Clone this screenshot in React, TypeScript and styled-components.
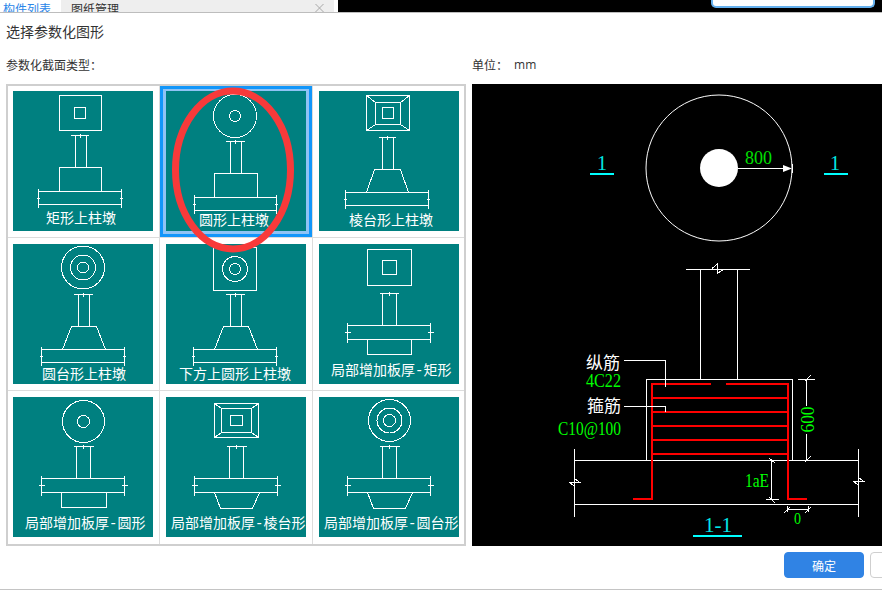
import React from 'react';
import styled, { createGlobalStyle } from 'styled-components';

type Tile = {
  label: string;
  labelX: number;
  labelY: number;
  rects?: number[][];
  circles?: number[][];
  miter?: boolean;
  col: number[];
  cap: number[];
  colEnd: number;
  slab: number[];
  pier: number[][];
  tick: number;
};

const tiles: Tile[] = [
  {
    label: '矩形上柱墩',
    labelX: 33,
    labelY: 120,
    rects: [[46.5, 4.5, 42, 35], [61.5, 16.5, 11, 11]],
    col: [62.5, 73.5],
    cap: [58, 76, 44.5],
    colEnd: 76.5,
    slab: [25.5, 108.5, 100.5, 113.5],
    pier: [[46.5, 100.5], [46.5, 76.5], [88.5, 76.5], [88.5, 100.5]],
    tick: 1.5,
  },
  {
    label: '圆形上柱墩',
    labelX: 33,
    labelY: 122,
    circles: [[69, 25, 21.5], [69, 25, 5.5]],
    col: [64.5, 75.5],
    cap: [60, 79, 50.5],
    colEnd: 82.5,
    slab: [28.5, 110.5, 106.5, 119.5],
    pier: [[48.5, 106.5], [48.5, 82.5], [91.5, 82.5], [91.5, 106.5]],
    tick: 1.5,
  },
  {
    label: '棱台形上柱墩',
    labelX: 30,
    labelY: 122,
    rects: [[47.5, 4.5, 43, 35], [56.5, 11.5, 25, 22], [63.5, 16.5, 11, 11]],
    miter: true,
    col: [63.5, 74.5],
    cap: [59.5, 76.5, 46.5],
    colEnd: 78.5,
    slab: [26.5, 109.5, 101.5, 114.5],
    pier: [[47.5, 101.5], [55.5, 78.5], [81.5, 78.5], [89.5, 101.5]],
    tick: 1.5,
  },
  {
    label: '圆台形上柱墩',
    labelX: 29,
    labelY: 123,
    circles: [[70, 23.5, 21.5], [70, 23.5, 12.5], [70, 23.5, 5.5]],
    col: [65.5, 76.5],
    cap: [61, 80, 50.5],
    colEnd: 82.5,
    slab: [28.5, 111.5, 105.5, 118.5],
    pier: [[49.5, 105.5], [58.5, 82.5], [83.5, 82.5], [92.5, 105.5]],
    tick: 1.5,
  },
  {
    label: '下方上圆形上柱墩',
    labelX: 13,
    labelY: 123,
    rects: [[47.5, 3.5, 43, 43]],
    circles: [[69, 25, 12.5], [69, 25, 5.5]],
    col: [64.5, 75.5],
    cap: [60, 79, 50.5],
    colEnd: 82.5,
    slab: [27.5, 110.5, 105.5, 118.5],
    pier: [[48.5, 105.5], [57.5, 82.5], [82.5, 82.5], [91.5, 105.5]],
    tick: 1.5,
  },
  {
    label: '局部增加板厚-矩形',
    labelX: 12,
    labelY: 119,
    rects: [[48.5, 5.5, 44, 36], [63.5, 16.5, 14, 14]],
    col: [63.5, 77.5],
    cap: [61, 80, 49.5],
    colEnd: 81.5,
    slab: [28.5, 111.5, 81.5, 95.5],
    pier: [[48.5, 95.5], [48.5, 110.5], [92.5, 110.5], [92.5, 95.5]],
    tick: 3,
  },
  {
    label: '局部增加板厚-圆形',
    labelX: 12,
    labelY: 119,
    circles: [[70.5, 24.5, 21], [70.5, 24.5, 6]],
    col: [63.5, 77.5],
    cap: [61, 80.5, 49.5],
    colEnd: 81.5,
    slab: [28.5, 111.5, 81.5, 95.5],
    pier: [[48.5, 95.5], [48.5, 110.5], [93.5, 110.5], [93.5, 95.5]],
    tick: 3,
  },
  {
    label: '局部增加板厚-棱台形',
    labelX: 5,
    labelY: 119,
    rects: [[48.5, 6.5, 44, 34], [55.5, 11.5, 30, 24], [64.5, 18.5, 12, 10]],
    miter: true,
    col: [63.5, 77.5],
    cap: [61, 80.5, 49.5],
    colEnd: 81.5,
    slab: [28.5, 111.5, 81.5, 95.5],
    pier: [[48.5, 95.5], [54.5, 111.5], [86.5, 111.5], [93.5, 95.5]],
    tick: 3,
  },
  {
    label: '局部增加板厚-圆台形',
    labelX: 5,
    labelY: 119,
    circles: [[70.5, 23.5, 21], [70.5, 23.5, 12.5], [70.5, 23.5, 6]],
    col: [63.5, 77.5],
    cap: [61, 80.5, 49.5],
    colEnd: 81.5,
    slab: [28.5, 111.5, 81.5, 95.5],
    pier: [[48.5, 95.5], [54.5, 111.5], [86.5, 111.5], [93.5, 95.5]],
    tick: 3,
  },
];

const GlobalStyle = createGlobalStyle`
  html, body {
    margin: 0;
    padding: 0;
    background: #fff;
  }
`;

const Page = styled.div`
  position: relative;
  width: 882px;
  height: 590px;
  overflow: hidden;
  background: #fff;
  color: #333;
  font-family: 'Noto Sans CJK SC', 'Liberation Sans', sans-serif;
`;

const TopStrip = styled.div`
  display: flex;
  height: 12px;
  border-bottom: 1px solid #bdbdbd;
`;

const TabBar = styled.div`
  display: flex;
  width: 334px;
  background: #eeeeee;
  overflow: hidden;
  position: relative;
`;

const Tab = styled.div<{ $active?: boolean }>`
  width: ${(p) => (p.$active ? '61px' : '66px')};
  height: 12px;
  padding-left: ${(p) => (p.$active ? '3px' : '10px')};
  box-sizing: border-box;
  font-size: 12px;
  line-height: 17px;
  white-space: nowrap;
  background: ${(p) => (p.$active ? '#fff' : 'transparent')};
  color: ${(p) => (p.$active ? '#2a86e8' : '#333')};
`;

const CloseMark = styled.svg`
  margin-left: auto;
  margin-right: 10px;
  margin-top: 4px;
  width: 9px;
  height: 8px;
  stroke: #a8a8a8;
  stroke-width: 1;
`;

const BlackStrip = styled.div`
  flex: 1;
  margin-left: 4px;
  background: #000;
  display: flex;
  justify-content: flex-end;
`;

const SearchEdge = styled.div`
  width: 164px;
  height: 8px;
  margin-right: 7px;
  box-sizing: border-box;
  background: #fff;
  border: 2px solid #66b1ee;
  border-top: none;
  border-radius: 0 0 5px 5px;
`;

const Dialog = styled.div`
  height: 577px;
  box-sizing: border-box;
  border-bottom: 1px solid #c4c4c4;
  display: flex;
  flex-direction: column;
`;

const Title = styled.div`
  height: 38px;
  padding: 10px 0 0 6px;
  box-sizing: border-box;
  font-size: 14px;
  line-height: 16px;
`;

const Columns = styled.div`
  display: grid;
  grid-template-columns: 460px 410px;
  gap: 6px;
  padding-left: 6px;
`;

const Column = styled.div`
  display: flex;
  flex-direction: column;
`;

const FieldRow = styled.div`
  display: flex;
  height: 33px;
  padding-top: 6px;
  box-sizing: border-box;
  font-size: 12px;
  line-height: 16px;
`;

const UnitValue = styled.span`
  margin-left: 6px;
  font-family: 'Open Sans', 'Liberation Sans', sans-serif;
  font-size: 12px;
`;

const TileGrid = styled.div`
  width: 460px;
  height: 462px;
  box-sizing: border-box;
  border: 2px solid #cfcfcf;
  background: #dcdcdc;
  display: grid;
  grid-template-columns: 151px 152px 151px;
  grid-template-rows: 151px 152px 153px;
  gap: 1px;
`;

const Cell = styled.div<{ $selected?: boolean }>`
  display: flex;
  justify-content: flex-end;
  align-items: flex-end;
  padding: 0 6px 6px 0;
  box-sizing: border-box;
  background: ${(p) => (p.$selected ? '#8fc3f5' : '#fff')};
  box-shadow: ${(p) => (p.$selected ? 'inset 0 0 0 3px #1296fa' : 'none')};

  &:nth-child(3n) {
    padding-right: 5px;
  }
  &:nth-child(n + 7) {
    padding-bottom: 7px;
  }
`;

const TileBox = styled.div`
  position: relative;
  width: 140px;
  height: 140px;
  background: #008080;
`;

const TileArt = styled.svg`
  display: block;
  fill: none;
  stroke: #fff;
  stroke-width: 1;
  shape-rendering: crispEdges;
`;

const TileLabel = styled.span<{ $x: number; $y: number }>`
  position: absolute;
  left: ${(p) => p.$x}px;
  top: ${(p) => p.$y}px;
  font-family: 'Liberation Mono', 'Noto Sans CJK SC', sans-serif;
  font-size: 14px;
  line-height: 16px;
  white-space: nowrap;
  color: #fff;
`;

const Preview = styled.svg`
  display: block;
  width: 410px;
  height: 462px;
  background: #000;
`;

const CadText = styled.text<{ $color: string }>`
  font-family: 'Liberation Serif', serif;
  fill: ${(p) => p.$color};
`;

const CadNote = styled.text`
  font-family: 'Noto Sans CJK SC', sans-serif;
  font-size: 17px;
  fill: #fff;
`;

const Wire = styled.path<{ $color?: string; $width?: number }>`
  fill: none;
  stroke: ${(p) => p.$color ?? '#fff'};
  stroke-width: ${(p) => p.$width ?? 1};
  shape-rendering: crispEdges;
`;

const Footer = styled.div`
  display: flex;
  gap: 6px;
  padding: 6px 0 0 784px;
`;

const Button = styled.button<{ $primary?: boolean }>`
  flex: none;
  width: 80px;
  height: 26px;
  padding: 0;
  border-radius: 4px;
  border: 1px solid ${(p) => (p.$primary ? '#3083e4' : '#cfcfcf')};
  background: ${(p) => (p.$primary ? '#3083e4' : '#fff')};
  color: ${(p) => (p.$primary ? '#fff' : '#333')};
  font-family: inherit;
  font-size: 12px;
`;

const Highlight = styled.svg`
  position: absolute;
  left: 168px;
  top: 84px;
  fill: none;
  stroke: #f83a3a;
  stroke-width: 7;
`;

const TileDrawing = ({ tile }: { tile: Tile }) => {
  const [sx1, sx2, sy1, sy2] = tile.slab;
  const [capA, capB, capY] = tile.cap;
  const tickX = (capA + capB) / 2;
  const mid = (sy1 + sy2) / 2;
  const outer = tile.rects?.[0];
  const inner = tile.rects?.[1];

  return (
    <TileArt width={140} height={140} viewBox="0 0 140 140">
      {tile.rects?.map((r, i) => (
        <rect key={i} x={r[0]} y={r[1]} width={r[2]} height={r[3]} />
      ))}
      {tile.circles?.map((c, i) => (
        <circle key={i} cx={c[0]} cy={c[1]} r={c[2]} />
      ))}
      {tile.miter && outer && inner && (
        <path
          d={`M${outer[0]} ${outer[1]}L${inner[0]} ${inner[1]}
              M${outer[0] + outer[2]} ${outer[1]}L${inner[0] + inner[2]} ${inner[1]}
              M${outer[0]} ${outer[1] + outer[3]}L${inner[0]} ${inner[1] + inner[3]}
              M${outer[0] + outer[2]} ${outer[1] + outer[3]}L${inner[0] + inner[2]} ${inner[1] + inner[3]}`}
        />
      )}
      <path d={`M${capA} ${capY}H${capB}M${tickX} ${capY - 1.5}V${capY + 2.5}`} />
      <path d={`M${tile.col[0]} ${capY}V${tile.colEnd}M${tile.col[1]} ${capY}V${tile.colEnd}`} />
      <polyline points={tile.pier.map((p) => p.join(',')).join(' ')} />
      <path d={`M${sx1} ${sy1}H${sx2}M${sx1} ${sy2}H${sx2}`} />
      <path d={`M${sx1} ${sy1 - 3}V${sy2 + 3}M${sx2} ${sy1 - 3}V${sy2 + 3}`} />
      <path d={`M${sx1 - tile.tick} ${mid}H${sx1 + tile.tick}M${sx2 - tile.tick} ${mid}H${sx2 + tile.tick}`} />
    </TileArt>
  );
};

const SectionPreview = () => (
  <Preview viewBox="472 84 410 462">
    <circle cx={719} cy={168} r={73} fill="none" stroke="#fff" strokeWidth={1} />
    <circle cx={719} cy={168} r={19} fill="#fff" />
    <Wire d="M738 168.5H784M792.5 164V173" />
    <path d="M783 165L792 168.5L783 172Z" fill="#fff" />
    <CadText $color="#00e000" x={745} y={164} fontSize={18} textLength={27} lengthAdjust="spacingAndGlyphs">
      800
    </CadText>

    <CadText $color="#00e6e6" x={597} y={170} fontSize={22} textLength={10} lengthAdjust="spacingAndGlyphs">
      1
    </CadText>
    <Wire d="M590 174H614" $color="#00ffff" $width={2} />
    <CadText $color="#00e6e6" x={830} y={170} fontSize={22} textLength={10} lengthAdjust="spacingAndGlyphs">
      1
    </CadText>
    <Wire d="M824 174H848" $color="#00ffff" $width={2} />

    <Wire d="M686 269.5H750" />
    <Wire d="M712 268.5L717.5 264V273.5L722.5 270" />
    <Wire d="M700.5 269.5V379.5M737.5 269.5V379.5" />
    <Wire d="M646.5 460V379.5H792.5V460" />

    <Wire d="M574 460.5H858M574 504.5H858M574.5 449V517M858.5 449V517" />
    <Wire d="M569 482.5H580L575 479M569 482.5L575 486" />
    <Wire d="M853 481.5H864L859 478M853 481.5L859 485" />

    <Wire d="M633 499H652V384H711M726 384H788V499H807" $color="#ff0000" $width={2} />
    <Wire d="M652 398H788M652 412H788M652 426H788M652 440H788M652 454H788" $color="#ff0000" $width={2} />

    <CadNote x={586} y={369}>纵筋</CadNote>
    <CadNote x={587} y={412}>箍筋</CadNote>
    <Wire d="M624 360.5H665.5V387M624 406.5H665.5V412" />
    <CadText $color="#00ff00" x={586} y={387} fontSize={18} textLength={35} lengthAdjust="spacingAndGlyphs">
      4C22
    </CadText>
    <CadText $color="#00ff00" x={558} y={435} fontSize={18} textLength={63} lengthAdjust="spacingAndGlyphs">
      C10@100
    </CadText>

    <Wire d="M806.5 379.5V406M806.5 434V460M798 379.5H815M804.5 381.5L811 375M804.5 462.5L811 456" />
    <CadText
      $color="#00ff00"
      x={0}
      y={0}
      fontSize={18}
      textLength={26}
      lengthAdjust="spacingAndGlyphs"
      transform="translate(813.5 432.5) rotate(-90)"
    >
      600
    </CadText>

    <Wire d="M771.5 460V499.5M766 499.5H779M769 458L775 463M769 497L775 503" />
    <CadText $color="#00ff00" x={745} y={487} fontSize={18} textLength={24} lengthAdjust="spacingAndGlyphs">
      1aE
    </CadText>

    <Wire d="M788 509H808M787.5 506V512M808.5 506V512M784 513L790 507M805 513L811 507" />
    <CadText $color="#00ff00" x={794} y={524} fontSize={16} textLength={7} lengthAdjust="spacingAndGlyphs">
      0
    </CadText>

    <CadText $color="#00e6e6" x={704} y={532} fontSize={22} textLength={28} lengthAdjust="spacingAndGlyphs">
      1-1
    </CadText>
    <Wire d="M693 536H742" $color="#00ffff" $width={2} />
  </Preview>
);

const App = () => {
  return (
    <Page>
      <GlobalStyle />
      <TopStrip>
        <TabBar>
          <Tab $active>构件列表</Tab>
          <Tab>图纸管理</Tab>
          <CloseMark viewBox="0 0 9 8">
            <path d="M0.5 0L8.5 8M8.5 0L0.5 8" />
          </CloseMark>
        </TabBar>
        <BlackStrip>
          <SearchEdge />
        </BlackStrip>
      </TopStrip>

      <Dialog>
        <Title>选择参数化图形</Title>
        <Columns>
          <Column>
            <FieldRow>参数化截面类型：</FieldRow>
            <TileGrid>
              {tiles.map((tile, i) => (
                <Cell key={tile.label} $selected={i === 1}>
                  <TileBox>
                    <TileDrawing tile={tile} />
                    <TileLabel $x={tile.labelX} $y={tile.labelY}>
                      {tile.label}
                    </TileLabel>
                  </TileBox>
                </Cell>
              ))}
            </TileGrid>
          </Column>
          <Column>
            <FieldRow>
              单位：
              <UnitValue>mm</UnitValue>
            </FieldRow>
            <SectionPreview />
          </Column>
        </Columns>
        <Footer>
          <Button $primary>确定</Button>
          <Button>取消</Button>
        </Footer>
      </Dialog>

      <Highlight width={130} height={172} viewBox="0 0 130 172">
        <ellipse cx={65} cy={86} rx={57.5} ry={79} />
      </Highlight>
    </Page>
  );
};

export default App;
